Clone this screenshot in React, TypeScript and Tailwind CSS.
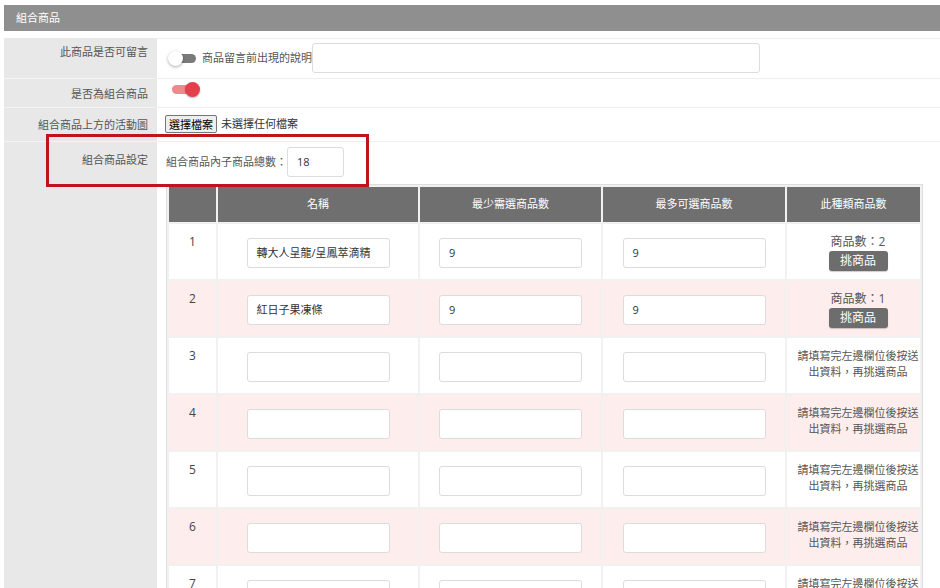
import React from 'react';

const font = 'font-["Open_Sans","Noto_Sans_CJK_TC",sans-serif]';

type Row = { name: string; min: string; max: string; count?: number };

const rows: Row[] = [
  { name: '轉大人呈龍/呈鳳萃滴精', min: '9', max: '9', count: 2 },
  { name: '紅日子果凍條', min: '9', max: '9', count: 1 },
  { name: '', min: '', max: '' },
  { name: '', min: '', max: '' },
  { name: '', min: '', max: '' },
  { name: '', min: '', max: '' },
  { name: '', min: '', max: '' },
  { name: '', min: '', max: '' },
];

const Toggle: React.FC<{ on?: boolean }> = ({ on }) =>
  on ? (
    <div className="relative w-[28px] h-[15px]">
      <div className="absolute left-0 right-[6px] top-[3px] h-[9px] rounded-full bg-[#f0888e]" />
      <div className="absolute right-0 top-0 w-[15px] h-[15px] rounded-full bg-[#e2404a] shadow-[0_1px_2px_rgba(0,0,0,0.3)]" />
    </div>
  ) : (
    <div className="relative w-[28px] h-[15px]">
      <div className="absolute left-[8px] right-0 top-[3px] h-[9px] rounded-full bg-[#7a7a7a]" />
      <div className="absolute left-0 top-0 w-[15px] h-[15px] rounded-full bg-white shadow-[0_1px_3px_rgba(0,0,0,0.35)]" />
    </div>
  );

const TextBox: React.FC<{ value: string; className?: string }> = ({ value, className }) => (
  <div
    className={`h-[30px] border border-[#dcdcdc] rounded-[3px] bg-white flex items-center pl-[9px] text-[11px] text-[#333] ${className ?? ''}`}
  >
    {value}
  </div>
);

const App: React.FC = () => {
  return (
    <div className={`relative w-[940px] h-[588px] overflow-hidden bg-white pt-[5px] pl-[4px] ${font} text-[#555]`}>
      <div className="h-[26px] bg-[#8f8f8f] text-white text-[11px] flex items-center pl-[12px]">組合商品</div>

      <div className="mt-[7px] grid grid-cols-[153px_1fr] text-[11px]">
        {/* row 1 */}
        <div className="h-[41px] bg-[#e8e8e8] border-b border-[#f4f4f4] text-right pr-[9px] pt-[6px] leading-[16px]">
          此商品是否可留言
        </div>
        <div className="h-[41px] border-b border-t border-[#efefef] pl-[11px] pt-[4px] flex items-start">
          <div className="flex items-center h-[30px]">
            <Toggle />
            <span className="ml-[6px] text-[#555]">商品留言前出現的說明</span>
            <TextBox value="" className="ml-0 w-[448px]" />
          </div>
        </div>

        {/* row 2 */}
        <div className="h-[29px] bg-[#e8e8e8] border-b border-[#f4f4f4] text-right pr-[9px] pt-[7px] leading-[16px]">
          是否為組合商品
        </div>
        <div className="h-[29px] border-b border-[#efefef] pl-[15px] pt-[3px]">
          <Toggle on />
        </div>

        {/* row 3 */}
        <div className="h-[34px] bg-[#e8e8e8] border-b border-[#f4f4f4] text-right pr-[9px] pt-[9px] leading-[16px]">
          組合商品上方的活動圖
        </div>
        <div className="h-[34px] border-b border-[#efefef] pl-[8px] pt-[7px] flex items-start">
          <div className="h-[18px] px-[3px] border border-[#767676] rounded-[2px] bg-[#efefef] text-black flex items-center leading-none">
            選擇檔案
          </div>
          <span className="ml-[4px] mt-[1px] text-[#333] leading-[16px]">未選擇任何檔案</span>
        </div>

        {/* row 4 */}
        <div className="bg-[#e8e8e8] text-right pr-[9px] pt-[10px] leading-[16px] min-h-[460px]">組合商品設定</div>
        <div className="pl-[9px] pt-[5px]">
          <div className="flex items-center">
            <span>組合商品內子商品總數：</span>
            <TextBox value="18" className="ml-0 w-[57px]" />
          </div>

          <table className="mt-[7px] border-separate border-spacing-[2px] border border-[#dedede] bg-[#f1f1f1] w-[757px] table-fixed">
            <colgroup>
              <col className="w-[47px]" />
              <col className="w-[200px]" />
              <col className="w-[181px]" />
              <col className="w-[182px]" />
              <col className="w-[133px]" />
            </colgroup>
            <thead>
              <tr className="h-[35px] bg-[#6f6f6f] text-white">
                <th className="font-normal"></th>
                <th className="font-normal">名稱</th>
                <th className="font-normal">最少需選商品數</th>
                <th className="font-normal">最多可選商品數</th>
                <th className="font-normal">此種類商品數</th>
              </tr>
            </thead>
            <tbody>
              {rows.map((r, i) => {
                const bg = i % 2 === 1 ? 'bg-[#fdeded]' : 'bg-white';
                return (
                  <tr key={i} className={`h-[55px] ${bg}`}>
                    <td className="align-top text-center pt-[10px] text-[12px] leading-[16px] text-[#444]">{i + 1}</td>
                    <td className="align-top pt-[14px]">
                      <TextBox value={r.name} className="mx-auto w-[143px]" />
                    </td>
                    <td className="align-top pt-[14px]">
                      <TextBox value={r.min} className="mx-auto w-[143px]" />
                    </td>
                    <td className="align-top pt-[14px]">
                      <TextBox value={r.max} className="mx-auto w-[143px]" />
                    </td>
                    <td className="align-top pt-[10px] pl-[9px] text-center leading-[16px]">
                      {r.count !== undefined ? (
                        <div className="flex flex-col items-center">
                          <span className="text-[12px]">商品數：{r.count}</span>
                          <span className="mt-[1px] h-[20px] w-[59px] rounded-[3px] bg-[#6d6d6d] text-white text-[12px] flex items-center justify-center shadow-[0_1px_1px_rgba(0,0,0,0.2)]">
                            挑商品
                          </span>
                        </div>
                      ) : (
                        <span>
                          請填寫完左邊欄位後按送
                          <br />
                          出資料，再挑選商品
                        </span>
                      )}
                    </td>
                  </tr>
                );
              })}
            </tbody>
          </table>
        </div>
      </div>

      <div className="absolute left-[46px] top-[134px] w-[323px] h-[53px] border-[3px] border-[#c0141c]" />
    </div>
  );
};

export default App;
